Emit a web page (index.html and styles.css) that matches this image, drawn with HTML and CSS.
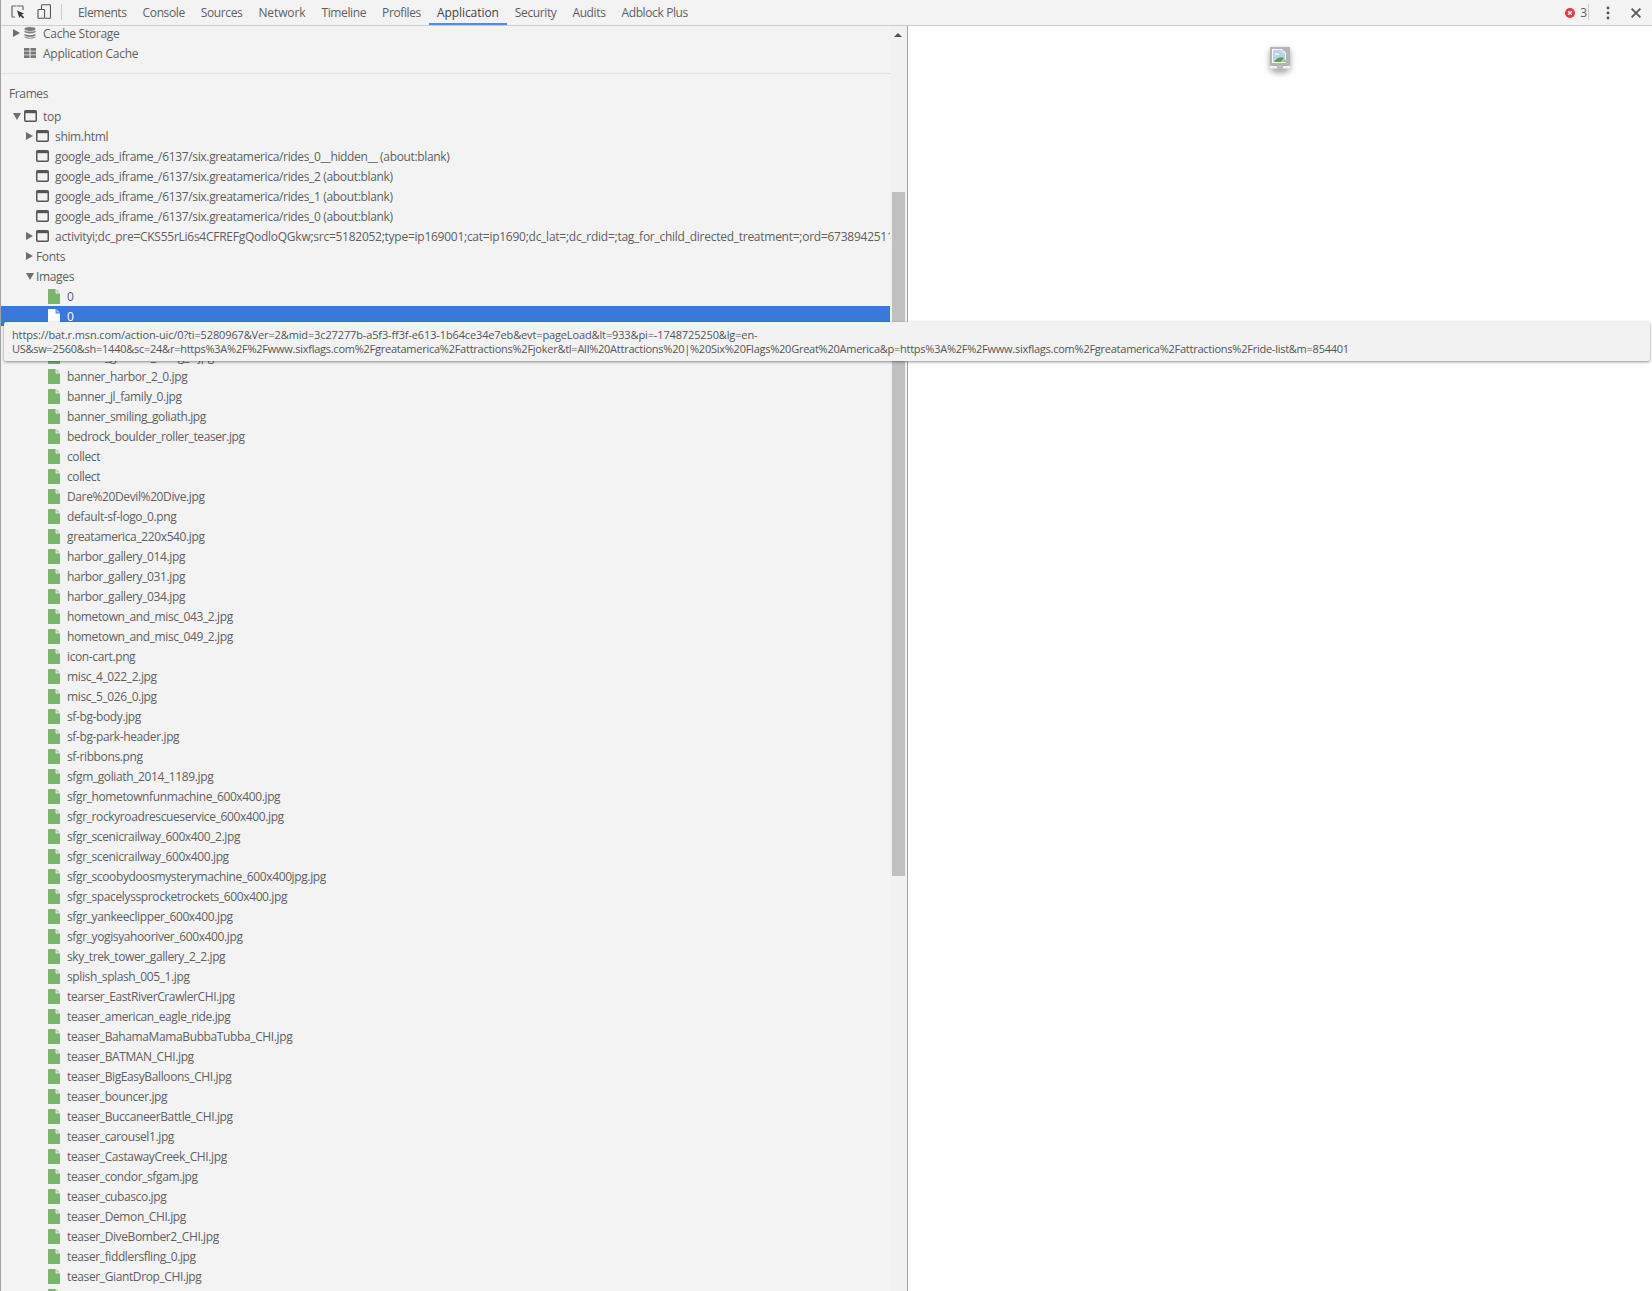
FILE: index.html
```html
<!DOCTYPE html>
<html lang="en">
<head>
<meta charset="utf-8">
<title>DevTools - Application</title>
<link rel="stylesheet" href="styles.css">
</head>
<body>
<svg class="defs" width="0" height="0" aria-hidden="true">
  <symbol id="file" viewBox="0 0 12 15"><path d="M0 .6Q0 0 .6 0H7.6V4.4H12V14.4Q12 15 11.4 15H.6Q0 15 0 14.4Z" fill="currentColor"/><path d="M8.4 0 12 3.6H8.4Z" fill="currentColor" opacity=".55"/></symbol>
  <symbol id="frame" viewBox="0 0 13 12"><rect x=".75" y=".75" width="11.5" height="10.5" rx="1" fill="none" stroke="#555" stroke-width="1.5"/><rect x="1" y="1" width="11" height="2.2" fill="#555"/></symbol>
</svg>
<div class="devtools">
  <header class="toolbar">
    <svg class="tool-inspect" width="14" height="14" viewBox="0 0 14 14"><path d="M5 1H1.5A.5.5 0 0 0 1 1.500V11.500A.5.5 0 0 0 1.500 12H4M5.500 1H11.500A.5.5 0 0 1 12 1.500V5" fill="none" stroke="#666" stroke-width="1.200"/><path d="M6 5.500 13 8.500 10.600 9.700 13.200 12.300 12 13.500 9.500 10.900 8.400 13Z" fill="#3c3c3c"/></svg>
    <svg class="tool-device" width="14" height="15" viewBox="0 0 14 15"><path d="M4.500 5V1.500A.7.7 0 0 1 5.200 .8H12.800A.7.7 0 0 1 13.500 1.500V13.500A.7.7 0 0 1 12.800 14.200H8" fill="none" stroke="#555" stroke-width="1.100"/><rect x="1" y="5.500" width="6.500" height="8.700" rx=".6" fill="#f3f3f3" stroke="#555" stroke-width="1.100"/></svg>
    <span class="tool-sep"></span>
    <nav class="tabs">
      <span class="tab">Elements</span>
      <span class="tab">Console</span>
      <span class="tab">Sources</span>
      <span class="tab tab-wide">Network</span>
      <span class="tab">Timeline</span>
      <span class="tab">Profiles</span>
      <span class="tab active">Application</span>
      <span class="tab">Security</span>
      <span class="tab">Audits</span>
      <span class="tab">Adblock Plus</span>
    </nav>
    <div class="tool-right">
      <svg class="err-icon" width="10" height="10" viewBox="0 0 10 10"><circle cx="5" cy="5" r="5" fill="#e23b41"/><path d="M3.200 3.200 6.800 6.800M6.800 3.200 3.200 6.800" stroke="#fff" stroke-width="1.300"/></svg>
      <span class="err-count">3</span>
      <span class="tool-sep right-sep"></span>
      <svg class="tool-menu" width="4" height="14" viewBox="0 0 4 14"><circle cx="2" cy="2" r="1.400" fill="#555"/><circle cx="2" cy="7" r="1.400" fill="#555"/><circle cx="2" cy="12" r="1.400" fill="#555"/></svg>
      <svg class="tool-close" width="10" height="10" viewBox="0 0 10 10"><path d="M.6.600 9.400 9.400M9.400.600.600 9.400" stroke="#555" stroke-width="1.700"/></svg>
    </div>
  </header>
  <main class="body">
    <section class="sidebar">
      <div class="tree">
        <div class="row lvl0"><i class="caret right"></i><svg class="db" width="12" height="12" viewBox="0 0 12 12"><ellipse cx="6" cy="2" rx="5.500" ry="1.900" fill="#7d7d7d"/><path d="M.5 3.400C1.500 5 10.500 5 11.500 3.400V5.100C10.500 6.800 1.500 6.800 .5 5.100ZM.5 6.800C1.500 8.400 10.500 8.400 11.500 6.800V8.500C10.500 10.200 1.500 10.200 .5 8.500ZM.5 9.600C1.500 11 10.500 11 11.500 9.600V10.300C10.500 12 1.500 12 .5 10.300Z" fill="#7d7d7d"/></svg><span>Cache Storage</span></div>
        <div class="row lvl0"><i class="caret none"></i><svg class="db" width="12" height="10" viewBox="0 0 12 10"><path d="M0 0H5.500V2.800H0ZM6.500 0H12V2.800H6.500ZM0 3.600H5.500V6.400H0ZM6.500 3.600H12V6.400H6.500ZM0 7.200H5.500V10H0ZM6.500 7.200H12V10H6.500Z" fill="#777"/></svg><span>Application Cache</span></div>
        <div class="divider"></div>
        <div class="row heading">Frames</div>
        <div class="row lvl0 top-row"><i class="caret down"></i><svg class="frame"><use href="#frame"/></svg><span>top</span></div>
        <div class="row lvl1"><i class="caret right"></i><svg class="frame"><use href="#frame"/></svg><span>shim.html</span></div>
        <div class="row lvl1"><i class="caret none"></i><svg class="frame"><use href="#frame"/></svg><span>google_ads_iframe_/6137/six.greatamerica/rides_0__hidden__ (about:blank)</span></div>
        <div class="row lvl1"><i class="caret none"></i><svg class="frame"><use href="#frame"/></svg><span>google_ads_iframe_/6137/six.greatamerica/rides_2 (about:blank)</span></div>
        <div class="row lvl1"><i class="caret none"></i><svg class="frame"><use href="#frame"/></svg><span>google_ads_iframe_/6137/six.greatamerica/rides_1 (about:blank)</span></div>
        <div class="row lvl1"><i class="caret none"></i><svg class="frame"><use href="#frame"/></svg><span>google_ads_iframe_/6137/six.greatamerica/rides_0 (about:blank)</span></div>
        <div class="row lvl1 activity"><i class="caret right"></i><svg class="frame"><use href="#frame"/></svg><span>activityi;dc_pre=CKS55rLi6s4CFREFgQodloQGkw;src=5182052;type=ip169001;cat=ip1690;dc_lat=;dc_rdid=;tag_for_child_directed_treatment=;ord=6738942511</span></div>
        <div class="row lvl1"><i class="caret right"></i><span>Fonts</span></div>
        <div class="row lvl1"><i class="caret down"></i><span>Images</span></div>
        <div class="row file"><svg class="ficon"><use href="#file"/></svg><span>0</span></div>
        <div class="row file selected"><svg class="ficon"><use href="#file"/></svg><span>0</span></div>
        <div class="row file"><svg class="ficon"><use href="#file"/></svg><span>banner_batman_0.jpg</span></div>
        <div class="row file"><svg class="ficon"><use href="#file"/></svg><span>banner_gotham_rising_2.jpg</span></div>
        <div class="row file"><svg class="ficon"><use href="#file"/></svg><span>banner_harbor_2_0.jpg</span></div>
        <div class="row file"><svg class="ficon"><use href="#file"/></svg><span>banner_jl_family_0.jpg</span></div>
        <div class="row file"><svg class="ficon"><use href="#file"/></svg><span>banner_smiling_goliath.jpg</span></div>
        <div class="row file"><svg class="ficon"><use href="#file"/></svg><span>bedrock_boulder_roller_teaser.jpg</span></div>
        <div class="row file"><svg class="ficon"><use href="#file"/></svg><span>collect</span></div>
        <div class="row file"><svg class="ficon"><use href="#file"/></svg><span>collect</span></div>
        <div class="row file"><svg class="ficon"><use href="#file"/></svg><span>Dare%20Devil%20Dive.jpg</span></div>
        <div class="row file"><svg class="ficon"><use href="#file"/></svg><span>default-sf-logo_0.png</span></div>
        <div class="row file"><svg class="ficon"><use href="#file"/></svg><span>greatamerica_220x540.jpg</span></div>
        <div class="row file"><svg class="ficon"><use href="#file"/></svg><span>harbor_gallery_014.jpg</span></div>
        <div class="row file"><svg class="ficon"><use href="#file"/></svg><span>harbor_gallery_031.jpg</span></div>
        <div class="row file"><svg class="ficon"><use href="#file"/></svg><span>harbor_gallery_034.jpg</span></div>
        <div class="row file"><svg class="ficon"><use href="#file"/></svg><span>hometown_and_misc_043_2.jpg</span></div>
        <div class="row file"><svg class="ficon"><use href="#file"/></svg><span>hometown_and_misc_049_2.jpg</span></div>
        <div class="row file"><svg class="ficon"><use href="#file"/></svg><span>icon-cart.png</span></div>
        <div class="row file"><svg class="ficon"><use href="#file"/></svg><span>misc_4_022_2.jpg</span></div>
        <div class="row file"><svg class="ficon"><use href="#file"/></svg><span>misc_5_026_0.jpg</span></div>
        <div class="row file"><svg class="ficon"><use href="#file"/></svg><span>sf-bg-body.jpg</span></div>
        <div class="row file"><svg class="ficon"><use href="#file"/></svg><span>sf-bg-park-header.jpg</span></div>
        <div class="row file"><svg class="ficon"><use href="#file"/></svg><span>sf-ribbons.png</span></div>
        <div class="row file"><svg class="ficon"><use href="#file"/></svg><span>sfgm_goliath_2014_1189.jpg</span></div>
        <div class="row file"><svg class="ficon"><use href="#file"/></svg><span>sfgr_hometownfunmachine_600x400.jpg</span></div>
        <div class="row file"><svg class="ficon"><use href="#file"/></svg><span>sfgr_rockyroadrescueservice_600x400.jpg</span></div>
        <div class="row file"><svg class="ficon"><use href="#file"/></svg><span>sfgr_scenicrailway_600x400_2.jpg</span></div>
        <div class="row file"><svg class="ficon"><use href="#file"/></svg><span>sfgr_scenicrailway_600x400.jpg</span></div>
        <div class="row file"><svg class="ficon"><use href="#file"/></svg><span>sfgr_scoobydoosmysterymachine_600x400jpg.jpg</span></div>
        <div class="row file"><svg class="ficon"><use href="#file"/></svg><span>sfgr_spacelyssprocketrockets_600x400.jpg</span></div>
        <div class="row file"><svg class="ficon"><use href="#file"/></svg><span>sfgr_yankeeclipper_600x400.jpg</span></div>
        <div class="row file"><svg class="ficon"><use href="#file"/></svg><span>sfgr_yogisyahooriver_600x400.jpg</span></div>
        <div class="row file"><svg class="ficon"><use href="#file"/></svg><span>sky_trek_tower_gallery_2_2.jpg</span></div>
        <div class="row file"><svg class="ficon"><use href="#file"/></svg><span>splish_splash_005_1.jpg</span></div>
        <div class="row file"><svg class="ficon"><use href="#file"/></svg><span>tearser_EastRiverCrawlerCHI.jpg</span></div>
        <div class="row file"><svg class="ficon"><use href="#file"/></svg><span>teaser_american_eagle_ride.jpg</span></div>
        <div class="row file"><svg class="ficon"><use href="#file"/></svg><span>teaser_BahamaMamaBubbaTubba_CHI.jpg</span></div>
        <div class="row file"><svg class="ficon"><use href="#file"/></svg><span>teaser_BATMAN_CHI.jpg</span></div>
        <div class="row file"><svg class="ficon"><use href="#file"/></svg><span>teaser_BigEasyBalloons_CHI.jpg</span></div>
        <div class="row file"><svg class="ficon"><use href="#file"/></svg><span>teaser_bouncer.jpg</span></div>
        <div class="row file"><svg class="ficon"><use href="#file"/></svg><span>teaser_BuccaneerBattle_CHI.jpg</span></div>
        <div class="row file"><svg class="ficon"><use href="#file"/></svg><span>teaser_carousel1.jpg</span></div>
        <div class="row file"><svg class="ficon"><use href="#file"/></svg><span>teaser_CastawayCreek_CHI.jpg</span></div>
        <div class="row file"><svg class="ficon"><use href="#file"/></svg><span>teaser_condor_sfgam.jpg</span></div>
        <div class="row file"><svg class="ficon"><use href="#file"/></svg><span>teaser_cubasco.jpg</span></div>
        <div class="row file"><svg class="ficon"><use href="#file"/></svg><span>teaser_Demon_CHI.jpg</span></div>
        <div class="row file"><svg class="ficon"><use href="#file"/></svg><span>teaser_DiveBomber2_CHI.jpg</span></div>
        <div class="row file"><svg class="ficon"><use href="#file"/></svg><span>teaser_fiddlersfling_0.jpg</span></div>
        <div class="row file"><svg class="ficon"><use href="#file"/></svg><span>teaser_GiantDrop_CHI.jpg</span></div>
        <div class="row file"><svg class="ficon"><use href="#file"/></svg></div>
      </div>
      <div class="scrollbar">
        <i class="scroll-up"></i>
        <div class="thumb"></div>
      </div>
    </section>
    <section class="preview">
      <svg class="broken" width="20" height="23" viewBox="0 0 20 23">
        <rect width="20" height="18.500" fill="#b4b4b4"/>
        <path d="M0 19H7V23H13V19H20V21.500H0Z" fill="#f4f4f4"/><rect x="7" y="18" width="6" height="5" fill="#bcbcbc"/>
        <path d="M2 2H12L16 6V16H2Z" fill="#fff"/><path d="M3 3H12L15 6V15H3Z" fill="#b7d2f2"/>
        <path d="M5 6.500h4v1.500H5Z" fill="#fff"/>
        <path d="M4 15C6 11 11 9 14 11L11 15Z" fill="#5aa63c"/><path d="M13 15 15 12 16 15Z" fill="#8fb57f"/>
        <path d="M12 2V6H16Z" fill="#e4e4e4"/>
      </svg>
    </section>
  </main>
  <div class="tooltip"><div class="tip-first">https://bat.r.msn.com/action-uic/0?ti=5280967&amp;Ver=2&amp;mid=3c27277b-a5f3-ff3f-e613-1b64ce34e7eb&amp;evt=pageLoad&amp;lt=933&amp;pi=-1748725250&amp;lg=en-</div><div class="tip-second">US&amp;sw=2560&amp;sh=1440&amp;sc=24&amp;r=https%3A%2F%2Fwww.sixflags.com%2Fgreatamerica%2Fattractions%2Fjoker&amp;tl=All%20Attractions%20|%20Six%20Flags%20Great%20America&amp;p=https%3A%2F%2Fwww.sixflags.com%2Fgreatamerica%2Fattractions%2Fride-list&amp;m=854401</div></div>
</div>
</body>
</html>
```
FILE: styles.css
```css
* { box-sizing: border-box; }
html, body { margin: 0; height: 100%; overflow: hidden; }
body { font-family: "Open Sans", "Noto Sans", sans-serif; font-size: 12px; color: #5f5f5f; background: #fff; }
.defs { position: absolute; }
.devtools { position: relative; height: 1291px; display: flex; flex-direction: column; border-left: 1px solid #a3a3a3; overflow: hidden; }

.toolbar { flex: 0 0 26px; display: flex; align-items: center; background: #f3f3f3; border-bottom: 1px solid #cdcdcd; padding-left: 10px; }
.tool-inspect { margin-right: 12px; margin-top: -2px; }
.tool-device { margin-top: -2px; }
.tool-sep { flex: none; width: 1px; height: 16px; background: #cfcfcf; margin-left: 10px; margin-top: -2px; }
.tabs { display: flex; height: 25px; margin-left: 8px; }
.tab { display: flex; align-items: center; padding: 0 8px 1px; letter-spacing: -.38px; white-space: nowrap; }
.tab-wide { letter-spacing: -.1px; }
.tab.active { color: #444; letter-spacing: -.07px; box-shadow: inset 0 -2px 0 #4a8af4; }
.tool-right { margin-left: auto; display: flex; align-items: center; }
.err-count { margin-left: 5px; }
.right-sep { margin-left: 1px; }
.tool-menu { margin-left: 17px; }
.tool-close { margin: 0 11px 0 21px; }

.body { flex: 1; display: flex; min-height: 0; }
.sidebar { flex: 0 0 907px; display: flex; background: #f3f3f3; border-right: 1px solid #a3a3a3; overflow: hidden; }
.tree { flex: 0 0 889px; min-width: 0; margin-top: -3px; overflow: hidden; }
.row { height: 20px; display: flex; align-items: center; white-space: nowrap; overflow: hidden; letter-spacing: -.38px; }
.lvl0 { padding-left: 12px; letter-spacing: -.27px; }
.lvl0 .db { margin-right: 7px; }
.lvl1 { padding-left: 25px; letter-spacing: -.34px; }
.activity { letter-spacing: -.26px; }
.caret { flex: 0 0 10px; width: 0; height: 0; }
.lvl0 .caret.none { flex-basis: 11px; }
.caret.right { flex: 0 0 0; border-left: 7px solid #6e6e6e; border-top: 4px solid transparent; border-bottom: 4px solid transparent; margin-right: 3px; }
.caret.down { flex: 0 0 0; border-top: 7px solid #6e6e6e; border-left: 4px solid transparent; border-right: 4px solid transparent; margin-right: 2px; }
.lvl0 .caret.right { margin-right: 4px; }
.lvl0 .caret.down { margin-right: 3px; }
.frame { flex: none; width: 13px; height: 12px; margin-right: 6px; }
.divider { height: 1px; background: #e0e0e0; margin-top: 10px; }
.heading { margin-top: 9px; margin-bottom: 3px; padding-left: 8px; }
.file { padding-left: 47px; }
.ficon { flex: none; width: 12px; height: 15px; margin-right: 7px; color: #7ab56c; }
.selected { background: #3879d9; color: #fff; }
.selected .ficon { color: #fff; }

.scrollbar { flex: 0 0 16px; background: #f1f1f1; display: flex; flex-direction: column; align-items: flex-start; }
.scroll-up { width: 0; height: 0; border-bottom: 4px solid #505050; border-left: 4px solid transparent; border-right: 4px solid transparent; margin: 7px 0 0 4px; }
.thumb { width: 13px; height: 684px; background: #c0c0c0; margin: 155px 0 0 2px; }

.preview { flex: 1; background: #fff; padding: 21px 0 0 362px; }
.broken { display: block; filter: drop-shadow(0 3px 3px rgba(0,0,0,.4)); }

.tooltip { position: absolute; left: 3px; top: 322px; width: 1646px; height: 39px; padding: 6px 8px; font-size: 11px; line-height: 14px; white-space: nowrap; color: #555; background: #f2f2f2; border-radius: 2px; box-shadow: 0 1px 3px rgba(0,0,0,.45); }
.tip-first { letter-spacing: -.13px; }
.tip-second { letter-spacing: -.25px; }
```
